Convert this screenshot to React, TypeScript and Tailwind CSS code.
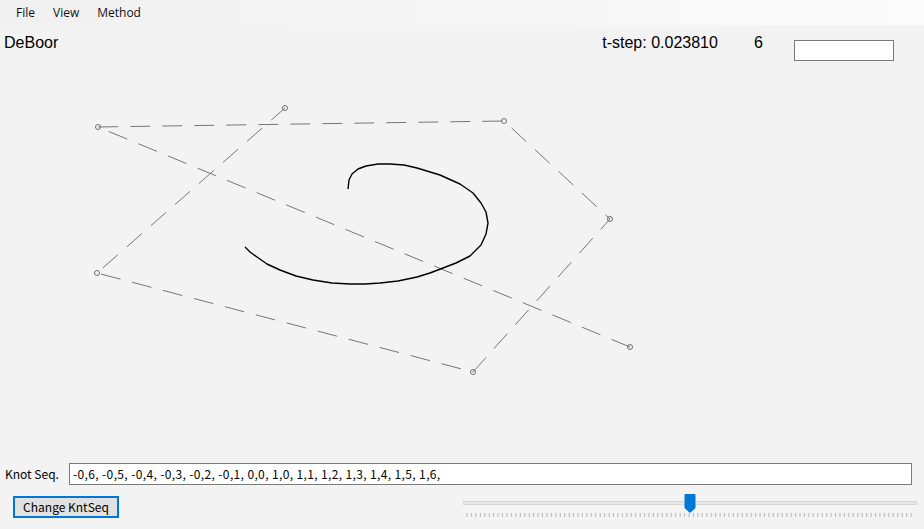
import React from "react";

const POLY: [number, number][] = [
  [630, 347],
  [98, 127],
  [504, 121],
  [610, 219],
  [473, 372],
  [97, 273],
  [285, 108],
];

const CURVE = [
  [348, 189], [349, 180], [352, 174], [358, 169], [366, 166], [378, 164], [390, 164],
  [404, 165], [417, 168], [440, 175], [460, 184], [473, 193], [481, 203], [486, 212],
  [488, 223], [486, 234], [481, 245], [470, 256], [456, 263], [443, 268], [430, 273],
  [417, 277], [398, 281], [380, 283], [365, 284], [350, 284], [332, 283], [313, 280],
  [296, 276], [280, 270], [267, 264], [257, 257], [250, 252], [245, 247],
];

const KNOTS = "-0,6, -0,5, -0,4, -0,3, -0,2, -0,1, 0,0, 1,0, 1,1, 1,2, 1,3, 1,4, 1,5, 1,6,";

function Canvas() {
  const pts = CURVE.map((p) => p.join(",")).join(" ");
  const poly = POLY.map((p) => p.join(",")).join(" ");
  return (
    <svg className="block" width={924} height={395} viewBox="0 60 924 395">
      <polyline
        points={poly}
        fill="none"
        stroke="#767676"
        strokeWidth={1}
        strokeDasharray="20 12"
      />
      {POLY.map(([x, y], i) => (
        <circle key={i} cx={x} cy={y} r={2.5} fill="none" stroke="#6f6f6f" strokeWidth={1} />
      ))}
      <polyline points={pts} fill="none" stroke="#000" strokeWidth={1.4} strokeLinejoin="round" />
    </svg>
  );
}

function Slider() {
  const ticks = Array.from({ length: 101 }, (_, i) => 4 + i * 4.44);
  return (
    <div className="relative h-[29px] w-[456px]">
      <div className="absolute left-0 top-[6px] h-[4px] w-[454px] border border-[#d6d6d6] bg-[#e7e7e7]" />
      <svg className="absolute left-0 top-[18px]" width={456} height={6}>
        {ticks.map((x, i) => (
          <line key={i} x1={x} x2={x} y1={0} y2={4} stroke="#b8b8b8" strokeWidth={1} />
        ))}
      </svg>
      <svg className="absolute left-[221px] top-[-1px]" width={12} height={20}>
        <path d="M0.5 1 Q0.5 0 1.5 0 L10.5 0 Q11.5 0 11.5 1 L11.5 14 L6 19 L0.5 14 Z" fill="#0078d7" />
      </svg>
    </div>
  );
}

export default function App() {
  return (
    <div
      className="flex h-[529px] w-[924px] flex-col overflow-hidden bg-[#f3f3f3] text-black"
      style={{ fontFamily: "'Liberation Sans', Arial, sans-serif" }}
    >
      <div className="flex h-[25px] items-center bg-gradient-to-r from-[#f0f0f0] via-[#f6f6f6] to-[#fbfbfb] pl-[7px] font-['Open_Sans',sans-serif] text-[12px] text-[#111]">
        <span className="px-[9px]">File</span>
        <span className="px-[9px]">View</span>
        <span className="px-[9px]">Method</span>
      </div>
      <div className="flex h-[35px] items-start pt-[6px] text-[16px]">
        <span className="pl-[4px]">DeBoor</span>
        <span className="ml-[544px]">t-step: 0.023810</span>
        <span className="ml-[36px]">6</span>
        <div className="ml-[31px] mt-[9px] h-[21px] w-[100px] border border-[#7a7a7a] bg-white" />
      </div>
      <Canvas />
      <div className="flex h-[38px] items-center font-['Noto_Sans_CJK_KR',sans-serif] text-[12px]">
        <span className="w-[69px] pl-[5px]">Knot Seq.</span>
        <div className="flex h-[22px] w-[843px] items-center border border-[#7a7a7a] bg-white pl-[3px] tracking-[0.37px]">
          {KNOTS}
        </div>
      </div>
      <div className="flex items-start">
        <div className="ml-[13px] mt-[3px] flex h-[22px] w-[106px] items-center justify-center border-2 border-[#0078d7] bg-[#e1e1e1] font-['Noto_Sans_CJK_KR',sans-serif] text-[12px]">
          Change KntSeq
        </div>
        <div className="ml-[344px] mt-[2px]">
          <Slider />
        </div>
      </div>
    </div>
  );
}
